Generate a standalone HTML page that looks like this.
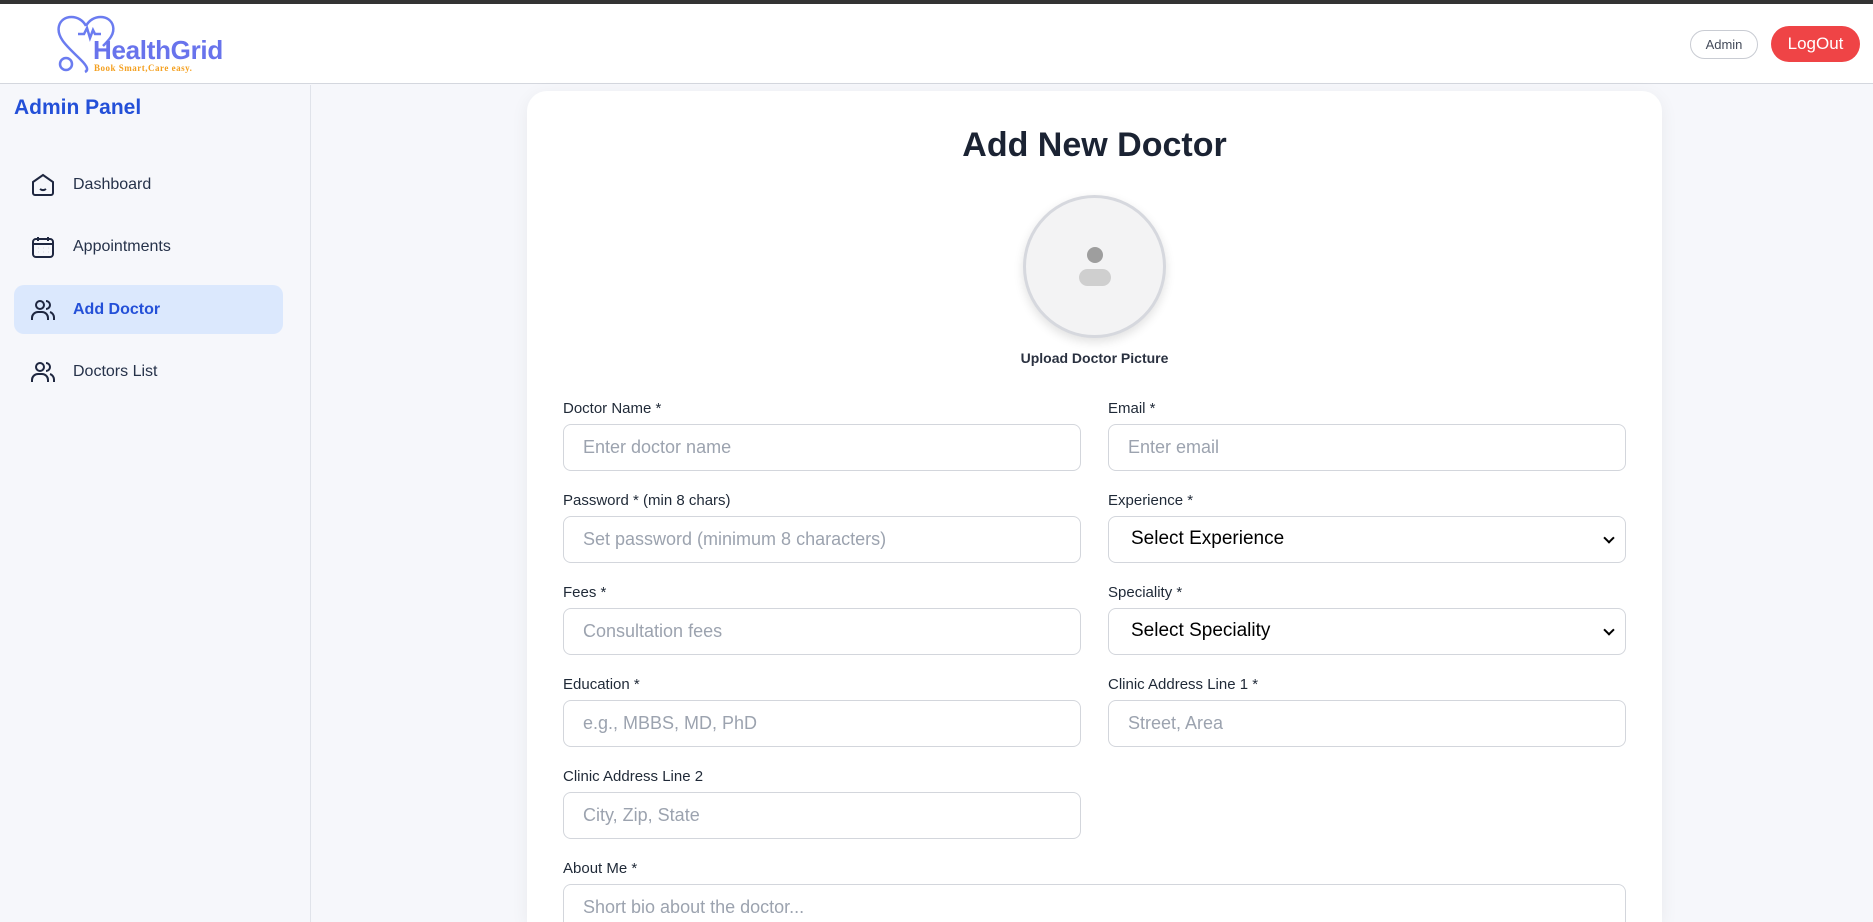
<!DOCTYPE html>
<html><head><meta charset="utf-8"><style>
*{box-sizing:border-box;margin:0;padding:0}
html{width:1873px;height:922px;overflow:hidden}
body{width:1873px;height:922px;overflow:hidden;background:#f6f7fb;font-family:"Liberation Sans",sans-serif;position:relative}
.topbar{position:absolute;left:0;top:0;width:1873px;height:4px;background:#333}
.header{position:absolute;left:0;top:4px;width:1873px;height:80px;background:#fff;border-bottom:1.5px solid #d4d7de}
.side{position:absolute;left:0;top:85px;width:311px;height:837px;background:#f6f7fb;border-right:1.5px solid #e0e3ea}
.ap{position:absolute;left:14px;top:96px;font-size:21px;font-weight:bold;color:#2450d8}
.nav{position:absolute;left:14px;width:269px;height:49px;border-radius:10px;display:flex;align-items:center;font-size:16px;color:#26324a}
.nav svg{position:absolute;left:17px}
.nav span{position:absolute;left:59px}
.nav.act{background:#dbe8fd;color:#2450d8;font-weight:bold}
.card{position:absolute;left:527px;top:91px;width:1135px;height:831px;background:#fff;border-radius:20px 20px 0 0;box-shadow:0 4px 18px rgba(0,0,0,.06)}
.title{position:absolute;left:527px;width:1135px;top:126px;text-align:center;font-size:34px;font-weight:bold;color:#1b2333}
.av{position:absolute;left:1023px;top:195px;width:143px;height:143px;border-radius:50%;background:#f3f3f4;border:3px solid #d6d8de;box-shadow:0 4px 10px rgba(0,0,0,.12)}
.up{position:absolute;left:527px;width:1135px;top:350px;text-align:center;font-size:14px;color:#2a3140;font-weight:bold}
.lbl{position:absolute;font-size:15px;color:#1f2937}
.inp{position:absolute;height:47px;border:1.5px solid #d3d6dc;border-radius:8px;background:#fff;font-size:18px;color:#9ca3af;padding-left:19px;line-height:44px;overflow:hidden}
.sel{color:#000;padding-left:22px;font-size:19px}
.sel:after{content:"";position:absolute;right:12px;top:17px;width:6px;height:6px;border-right:2px solid #000;border-bottom:2px solid #000;transform:rotate(45deg)}
.L{left:563px;width:518px}.R{left:1108px;width:518px}
</style></head><body>
<div class="topbar"></div>
<div class="header">
<svg style="position:absolute;left:56px;top:8px" width="60" height="62" viewBox="0 0 60 62" fill="none" stroke="#6b7cf0" stroke-width="2.5"><path d="M30 14C24 2 6 2 3 14c-3 12 10 22 22 34 6 6 8 10 4 12"/><path d="M30 14C36 2 54 2 57 14c2 8-4 14-10 20"/><path d="M22 22h6l3-6 3 10 3-8 2 4h6"/><circle cx="10" cy="52" r="6"/></svg>
<div style="position:absolute;left:93px;top:31px;font-size:26px;font-weight:bold;color:#6873ec;letter-spacing:-.3px">HealthGrid</div>
<div style="position:absolute;left:94px;top:59px;font-size:9px;font-weight:bold;color:#f4a020;font-family:'Liberation Serif',serif;letter-spacing:.5px">Book Smart,Care easy.</div>
<div style="position:absolute;left:1690px;top:26px;width:68px;height:29px;border:1px solid #c9ccd3;border-radius:15px;font-size:13px;color:#444b5a;text-align:center;line-height:27px">Admin</div>
<div style="position:absolute;left:1771px;top:22px;width:89px;height:36px;background:#ef4446;border-radius:18px;font-size:17px;color:#fff;text-align:center;line-height:36px">LogOut</div>
</div>
<div class="side"></div>
<div class="ap">Admin Panel</div>
<div class="nav" style="top:160px"><svg width="24" height="24" viewBox="0 0 24 24" fill="none" stroke="#1f2740" stroke-width="2"><path d="M2 9l10-7 10 7v11a2 2 0 0 1-2 2H4a2 2 0 0 1-2-2z"/><path d="M9 16c2 1.5 4 1.5 6 0"/></svg><span>Dashboard</span></div>
<div class="nav" style="top:222px"><svg width="24" height="24" viewBox="0 0 24 24" fill="none" stroke="#1f2740" stroke-width="2"><rect x="2" y="4" width="20" height="18" rx="3"/><path d="M2 9h20M7 2v4M17 2v4"/><g stroke-width="1.6"><path d="M7 13h.1M12 13h.1M17 13h.1M7 17h.1M12 17h.1M17 17h.1"/></g></svg><span>Appointments</span></div>
<div class="nav act" style="top:285px"><svg width="24" height="24" viewBox="0 0 24 24" fill="none" stroke="#1f2740" stroke-width="2"><circle cx="9" cy="7" r="4"/><path d="M1 22v-2a6 6 0 0 1 6-6h4a6 6 0 0 1 6 6v2"/><path d="M15 3a4 4 0 0 1 0 8M19 14a6 6 0 0 1 4 6v2"/></svg><span>Add Doctor</span></div>
<div class="nav" style="top:347px"><svg width="24" height="24" viewBox="0 0 24 24" fill="none" stroke="#1f2740" stroke-width="2"><circle cx="9" cy="7" r="4"/><path d="M1 22v-2a6 6 0 0 1 6-6h4a6 6 0 0 1 6 6v2"/><path d="M15 3a4 4 0 0 1 0 8M19 14a6 6 0 0 1 4 6v2"/></svg><span>Doctors List</span></div>
<div class="card"></div>
<div class="title">Add New Doctor</div>
<div class="av"><svg style="position:absolute;left:51px;top:47px" width="36" height="44" viewBox="0 0 36 44"><circle cx="18" cy="10" r="8" fill="#9e9e9e"/><rect x="2" y="24" width="32" height="17" rx="8.5" fill="#cfcfcf"/></svg></div>
<div class="up">Upload Doctor Picture</div>

<div class="lbl" style="left:563px;top:400px">Doctor Name *</div>
<div class="lbl" style="left:1108px;top:400px">Email *</div>
<div class="inp L" style="top:424px">Enter doctor name</div>
<div class="inp R" style="top:424px">Enter email</div>

<div class="lbl" style="left:563px;top:492px">Password * (min 8 chars)</div>
<div class="lbl" style="left:1108px;top:492px">Experience *</div>
<div class="inp L" style="top:516px">Set password (minimum 8 characters)</div>
<div class="inp R sel" style="top:516px">Select Experience</div>

<div class="lbl" style="left:563px;top:584px">Fees *</div>
<div class="lbl" style="left:1108px;top:584px">Speciality *</div>
<div class="inp L" style="top:608px">Consultation fees</div>
<div class="inp R sel" style="top:608px">Select Speciality</div>

<div class="lbl" style="left:563px;top:676px">Education *</div>
<div class="lbl" style="left:1108px;top:676px">Clinic Address Line 1 *</div>
<div class="inp L" style="top:700px">e.g., MBBS, MD, PhD</div>
<div class="inp R" style="top:700px">Street, Area</div>

<div class="lbl" style="left:563px;top:768px">Clinic Address Line 2</div>
<div class="inp L" style="top:792px">City, Zip, State</div>

<div class="lbl" style="left:563px;top:860px">About Me *</div>
<div class="inp" style="left:563px;width:1063px;top:884px;height:38px;border-bottom:none;border-radius:8px 8px 0 0">Short bio about the doctor...</div>
</body></html>
